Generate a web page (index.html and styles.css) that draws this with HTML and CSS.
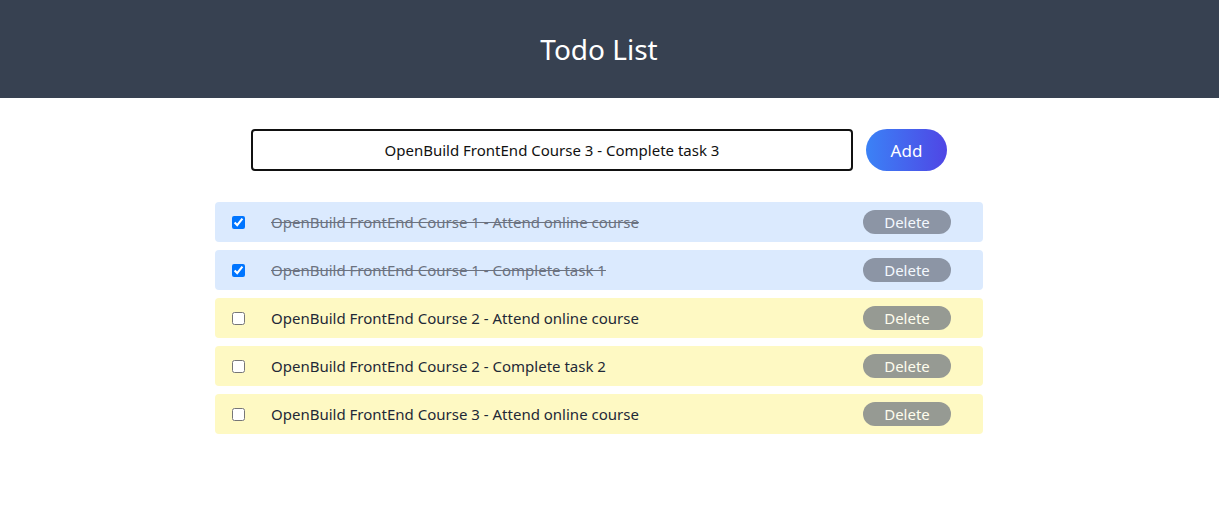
FILE: index.html
```html
<!DOCTYPE html>
<html lang="en">
<head>
<meta charset="utf-8">
<title>Todo List</title>
<link rel="stylesheet" href="styles.css">
</head>
<body>
<header class="header">
  <h1 class="title">Todo List</h1>
</header>
<main class="main">
  <form class="add-form">
    <input class="add-input" type="text" value="OpenBuild FrontEnd Course 3 - Complete task 3">
    <button class="add-btn" type="button">Add</button>
  </form>
  <ul class="list">
    <li class="item done">
      <input class="check" type="checkbox" checked>
      <span class="label">OpenBuild FrontEnd Course 1 - Attend online course</span>
      <button class="del-btn" type="button">Delete</button>
    </li>
    <li class="item done">
      <input class="check" type="checkbox" checked>
      <span class="label">OpenBuild FrontEnd Course 1 - Complete task 1</span>
      <button class="del-btn" type="button">Delete</button>
    </li>
    <li class="item">
      <input class="check" type="checkbox">
      <span class="label">OpenBuild FrontEnd Course 2 - Attend online course</span>
      <button class="del-btn" type="button">Delete</button>
    </li>
    <li class="item">
      <input class="check" type="checkbox">
      <span class="label">OpenBuild FrontEnd Course 2 - Complete task 2</span>
      <button class="del-btn" type="button">Delete</button>
    </li>
    <li class="item">
      <input class="check" type="checkbox">
      <span class="label">OpenBuild FrontEnd Course 3 - Attend online course</span>
      <button class="del-btn" type="button">Delete</button>
    </li>
  </ul>
</main>
</body>
</html>
```

FILE: styles.css
```css
* { box-sizing: border-box; }
html, body { margin: 0; padding: 0; background: #fff; }
body {
  font-family: "Noto Sans", "Open Sans", sans-serif;
  color: #1f2937;
}
.header {
  background: #374151;
  height: 98px;
  display: flex;
  align-items: center;
  justify-content: center;
  padding-right: 21px;
}
.title {
  margin: 0;
  color: #fff;
  font-weight: 400;
  font-size: 28px;
  line-height: 1;
}
.main {
  width: 768px;
  margin: 0 0 0 calc(50% - 394.5px);
  padding-top: 31px;
}
.add-form {
  display: flex;
  justify-content: center;
  align-items: center;
  gap: 13px;
  margin: 0 0 31px 0;
}
.add-input {
  width: 602px;
  height: 42px;
  border: 2px solid #111;
  border-radius: 4px;
  text-align: center;
  font-family: inherit;
  font-size: 15px;
  color: #111;
  background: #fff;
  outline: none;
}
.add-btn {
  width: 81px;
  height: 42px;
  border: 0;
  border-radius: 21px;
  background: linear-gradient(to right, #3b82f6, #4f46e5);
  color: #fff;
  font-family: inherit;
  font-size: 17px;
  padding: 0;
}
.list {
  list-style: none;
  margin: 0;
  padding: 0;
  display: flex;
  flex-direction: column;
  gap: 8px;
}
.item {
  height: 40px;
  border-radius: 4px;
  background: #fef9c3;
  display: flex;
  align-items: center;
  padding: 0 32px 0 17px;
}
.item.done { background: #dbeafe; }
.check {
  margin: 0;
  width: 13px;
  height: 13px;
}
.label {
  flex: 1;
  margin-left: 26px;
  font-size: 15px;
  color: #1f2937;
}
.item.done .label {
  color: #6b7280;
  text-decoration: line-through;
}
.del-btn {
  width: 88px;
  height: 24px;
  border: 0;
  border-radius: 12px;
  background: #6b7280;
  opacity: 0.7;
  color: #fff;
  font-family: inherit;
  font-size: 15px;
  padding: 0;
  line-height: 24px;
}
```
